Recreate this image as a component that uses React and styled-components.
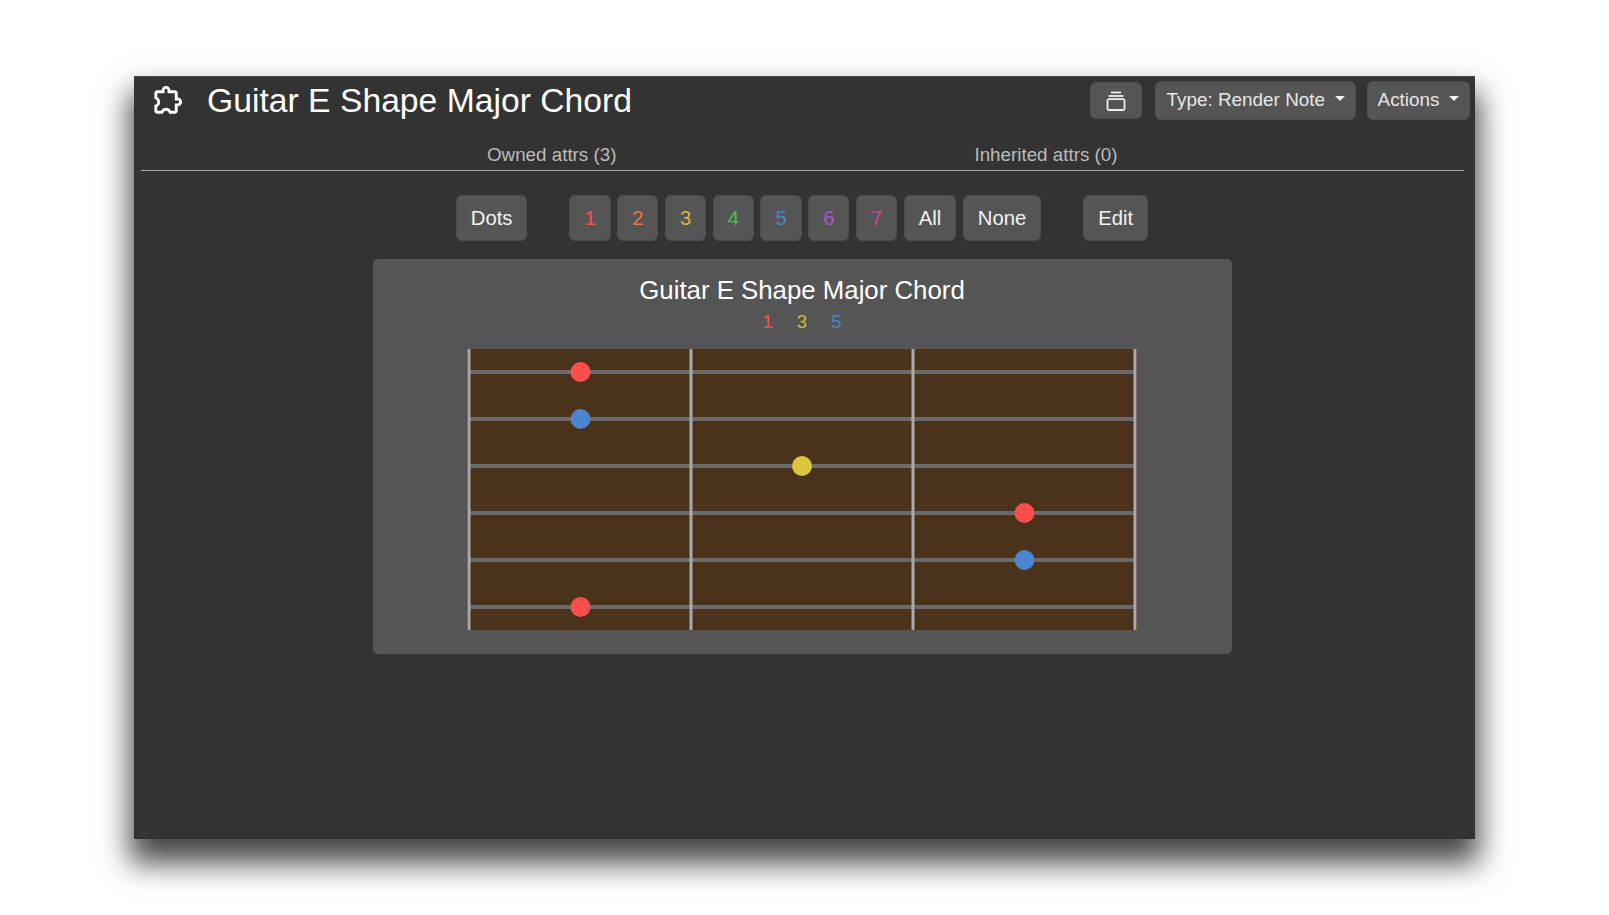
import { createGlobalStyle, styled } from 'styled-components';
import { BiExtension } from 'react-icons/bi';

const GlobalStyle = createGlobalStyle`
  html, body {
    margin: 0;
    background: #fff;
    font-family: "Liberation Sans", Arial, sans-serif;
  }
`;

const Page = styled.div`
  box-sizing: border-box;
  width: 1609px;
  height: 915px;
  padding: 76px 134px;
  overflow: hidden;
`;

const Window = styled.div`
  box-sizing: border-box;
  width: 1341px;
  height: 763px;
  background: #333;
  border-top: 1px solid #4a4a4a;
  box-shadow: 0 20px 28px 4px rgba(0, 0, 0, 0.72);
`;

const Header = styled.header`
  display: flex;
  align-items: center;
  height: 47px;
  padding: 0 5px 0 16px;
`;

const TitleIcon = styled(BiExtension)`
  width: 35px;
  height: 35px;
  color: #fff;
  margin-right: 22px;
`;

const Title = styled.h1`
  flex: 1;
  margin: 0;
  font-size: 33.7px;
  font-weight: 400;
  color: #fff;
`;

const Button = styled.button`
  box-sizing: border-box;
  height: 46px;
  padding: 0 14px;
  display: inline-flex;
  align-items: center;
  justify-content: center;
  background: #555;
  border: 1px solid #4d4d4d;
  border-radius: 6px;
  font: 20.3px "Liberation Sans", Arial, sans-serif;
  color: ${({ $color }) => $color || '#f2f2f2'};
`;

const HeaderButton = styled(Button)`
  height: 39px;
  padding: 0 10px 1px;
  font-size: 18.9px;
  margin-left: 11px;
  color: #e6e6e6;
  gap: 9.5px;

  &::after {
    content: '';
    border-top: 5.5px solid #f2f2f2;
    border-left: 5.5px solid transparent;
    border-right: 5.5px solid transparent;
    margin-top: -3px;
  }
`;

const IconButton = styled(Button)`
  width: 52px;
  height: 37px;
  padding: 0;
  margin-right: 2.5px;
`;

const Tabs = styled.nav`
  display: flex;
  gap: 358px;
  margin: 0 11px 0 7px;
  height: 47px;
  padding: 20px 0 0 346px;
  box-sizing: border-box;
  border-bottom: 1px solid #aaa;
  font-size: 18.8px;
  color: #bbb;
`;

const Content = styled.main`
  display: flex;
  flex-direction: column;
  align-items: center;
  margin: 0 12px 0 7px;
`;

const Controls = styled.div`
  display: flex;
  margin-top: 24px;
  gap: 42px;
`;

const ButtonGroup = styled.div`
  display: flex;
  gap: 6.5px;
`;

const NoteButton = styled(Button)`
  width: 41.25px;
  padding: 0;
`;

const Panel = styled.section`
  box-sizing: border-box;
  width: 859px;
  height: 395px;
  margin-top: 18px;
  padding-top: 15px;
  background: #555;
  border-radius: 5px;
  display: flex;
  flex-direction: column;
  align-items: center;
`;

const PanelTitle = styled.h2`
  margin: 0;
  font-size: 25.8px;
  font-weight: 400;
  line-height: 32px;
  color: #fff;
`;

const Legend = styled.div`
  display: flex;
  gap: 24px;
  margin-top: 4px;
  font-size: 18.5px;
  line-height: 24px;
`;

const LegendItem = styled.span`
  color: ${({ $color }) => $color};
`;

const Fretboard = styled.svg`
  display: block;
  margin: 14.5px 0.5px 0 0;
`;

const noteColors = ['#ff4d4d', '#f0703c', '#d4b83c', '#4fc04f', '#4a86d0', '#9a5cd0', '#c84a90'];

const stringYs = [23, 70, 117, 164, 211, 258];
const fretXs = [2, 224, 446, 668];
const dotColors = { 1: '#ff4d4d', 3: '#dcc63f', 5: '#4a86d0' };
const dots = [
  { x: 113.5, string: 0, note: 1 },
  { x: 113.5, string: 1, note: 5 },
  { x: 335, string: 2, note: 3 },
  { x: 557.5, string: 3, note: 1 },
  { x: 557.5, string: 4, note: 5 },
  { x: 113.5, string: 5, note: 1 },
];

function LayoutIcon() {
  return (
    <svg width="20" height="20" viewBox="0 0 20 20" fill="none" stroke="#eee" strokeWidth="1.8">
      <path d="M5 1.5h10" />
      <path d="M2.5 5h15" />
      <rect x="1.5" y="8.2" width="17" height="10.8" rx="1.5" />
    </svg>
  );
}

export default function App() {
  return (
    <Page>
      <GlobalStyle />
      <Window>
        <Header>
          <TitleIcon />
          <Title>Guitar E Shape Major Chord</Title>
          <IconButton aria-label="Layout">
            <LayoutIcon />
          </IconButton>
          <HeaderButton>Type: Render Note</HeaderButton>
          <HeaderButton>Actions</HeaderButton>
        </Header>
        <Tabs>
          <span>Owned attrs (3)</span>
          <span>Inherited attrs (0)</span>
        </Tabs>
        <Content>
          <Controls>
            <Button>Dots</Button>
            <ButtonGroup>
              {noteColors.map((color, i) => (
                <NoteButton key={i} $color={color}>{i + 1}</NoteButton>
              ))}
              <Button>All</Button>
              <Button>None</Button>
            </ButtonGroup>
            <Button>Edit</Button>
          </Controls>
          <Panel>
            <PanelTitle>Guitar E Shape Major Chord</PanelTitle>
            <Legend>
              <LegendItem $color={noteColors[0]}>1</LegendItem>
              <LegendItem $color={noteColors[2]}>3</LegendItem>
              <LegendItem $color={noteColors[4]}>5</LegendItem>
            </Legend>
            <Fretboard width="670" height="281" viewBox="0 0 670 281">
              <rect width="670" height="281" fill="#4a321b" />
              {stringYs.map((y) => (
                <line key={y} x1="3" x2="668" y1={y} y2={y} stroke="#6b6b6b" strokeWidth="4" />
              ))}
              {fretXs.map((x) => (
                <line key={x} x1={x} x2={x} y1="0" y2="281" stroke="#aaa" strokeWidth="3" />
              ))}
              {dots.map((d) => (
                <circle key={d.string} cx={d.x} cy={stringYs[d.string]} r="10" fill={dotColors[d.note]} />
              ))}
            </Fretboard>
          </Panel>
        </Content>
      </Window>
    </Page>
  );
}
